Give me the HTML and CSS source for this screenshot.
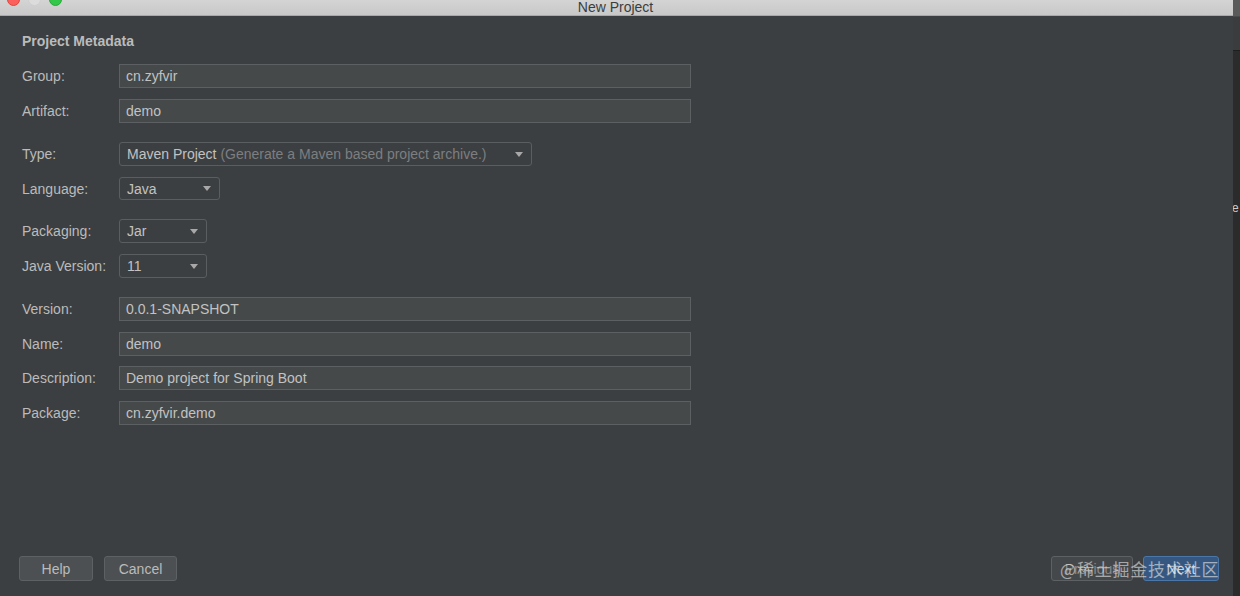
FILE: index.html
```html
<!DOCTYPE html>
<html>
<head>
<meta charset="utf-8">
<link rel="stylesheet" href="styles.css">
</head>
<body>
<div class="screen">
  <div class="window">
    <div class="titlebar">
      <div class="lights">
        <span class="light red"></span>
        <span class="light gray"></span>
        <span class="light green"></span>
      </div>
      <div class="title">New Project</div>
    </div>
    <div class="content">
      <div class="heading">Project Metadata</div>
      <div class="form">
        <div class="group">
          <div class="row"><label>Group:</label><div class="field wide">cn.zyfvir</div></div>
          <div class="row"><label>Artifact:</label><div class="field wide">demo</div></div>
        </div>
        <div class="group">
          <div class="row"><label>Type:</label><div class="combo type"><span>Maven Project <span class="hint">(Generate a Maven based project archive.)</span></span><span class="arrow"></span></div></div>
          <div class="row short"><label>Language:</label><div class="combo lang"><span>Java</span><span class="arrow"></span></div></div>
        </div>
        <div class="group">
          <div class="row"><label>Packaging:</label><div class="combo small"><span>Jar</span><span class="arrow"></span></div></div>
          <div class="row"><label>Java Version:</label><div class="combo small"><span>11</span><span class="arrow"></span></div></div>
        </div>
        <div class="group tight">
          <div class="row"><label>Version:</label><div class="field wide">0.0.1-SNAPSHOT</div></div>
          <div class="row"><label>Name:</label><div class="field wide">demo</div></div>
          <div class="row"><label>Description:</label><div class="field wide">Demo project for Spring Boot</div></div>
          <div class="row"><label>Package:</label><div class="field wide">cn.zyfvir.demo</div></div>
        </div>
      </div>
      <div class="footer">
        <div class="left">
          <div class="btn help">Help</div>
          <div class="btn cancel">Cancel</div>
        </div>
        <div class="right">
          <div class="btn prev">Previous</div>
          <div class="btn next">Next</div>
          <div class="watermark">@稀土掘金技术社区</div>
        </div>
      </div>
    </div>
  </div>
  <div class="strip">
    <div class="strip-top"></div>
    <div class="strip-bar"></div>
    <div class="strip-body"><span class="strip-e">e</span></div>
  </div>
</div>
</body>
</html>
```
FILE: styles.css
```css
* { box-sizing: border-box; }
html, body { margin: 0; padding: 0; }
body {
  width: 1240px;
  height: 596px;
  overflow: hidden;
  background: #2b2b2b;
  font-family: "Liberation Sans", Arial, sans-serif;
  font-size: 14px;
  color: #bbbbbb;
}
.screen { display: flex; width: 1240px; height: 596px; }
.window {
  width: 1233px;
  height: 596px;
  display: flex;
  flex-direction: column;
  background: #3c3f41;
}
.titlebar {
  height: 16px;
  background: linear-gradient(#d4d4d4, #c8c8c8);
  border-bottom: 1px solid #a9a9a9;
  position: relative;
  display: flex;
  justify-content: center;
  align-items: flex-end;
}
.lights {
  position: absolute;
  left: 7px;
  top: -7px;
  display: flex;
  gap: 8px;
}
.light { width: 13px; height: 13px; border-radius: 50%; display: block; }
.light.red { background: #fc605c; border: 1px solid #e0443e; }
.light.gray { background: #dcdcdc; border: 1px solid #cfcfcf; }
.light.green { background: #34c84a; border: 1px solid #27a93a; }
.title {
  font-size: 14px;
  color: #3d3d3d;
  line-height: 14px;
  margin-left: -2px;
  padding-bottom: 1px;
}
.content {
  flex: 1;
  display: flex;
  flex-direction: column;
  padding: 17px 0 0 22px;
}
.heading {
  font-weight: bold;
  color: #bbbbbb;
  font-size: 14px;
  line-height: 16px;
  height: 16px;
}
.form {
  margin-top: 15px;
  display: flex;
  flex-direction: column;
  gap: 19px;
}
.group { display: flex; flex-direction: column; gap: 11px; }
.group.tight { gap: 10.5px; }
.row { display: flex; align-items: center; height: 24px; }
.row.short { height: 23px; }
.row label { width: 97px; color: #bbbbbb; }
.field {
  height: 24px;
  background: #45494a;
  border: 1px solid #5d6062;
  padding: 0 6px;
  line-height: 22px;
  color: #c2c2c2;
}
.wide { width: 572px; }
.combo {
  height: 24px;
  background: #3c3f41;
  border: 1px solid #5b5e60;
  border-radius: 3px;
  padding: 0 6px 0 7px;
  display: flex;
  align-items: center;
  justify-content: space-between;
  line-height: 22px;
  color: #c2c2c2;
}
.row.short .combo { height: 23px; }
.combo .hint { color: #7c7e80; }
.combo.type { width: 413px; }
.combo.lang { width: 101px; }
.combo.small { width: 88px; }
.arrow {
  width: 0; height: 0;
  border-left: 4.5px solid transparent;
  border-right: 4.5px solid transparent;
  border-top: 5px solid #a8a8a8;
  margin-right: 2px;
}
.footer {
  margin-top: auto;
  margin-left: -3px;
  padding-bottom: 15px;
  display: flex;
  justify-content: space-between;
  align-items: center;
  padding-right: 14px;
}
.left, .right { display: flex; gap: 11px; }
.right { position: relative; gap: 10px; }
.btn {
  height: 25px;
  border: 1px solid #5e6163;
  border-radius: 3px;
  background: #4c5052;
  color: #bbbbbb;
  display: flex;
  align-items: center;
  justify-content: center;
  font-size: 14px;
}
.help { width: 74px; }
.cancel { width: 73px; }
.prev { width: 82px; color: #8a8a8a; background: #45484a; }
.next { width: 76px; background: #365880; border-color: #4a76a8; color: #c8d4e4; }
.watermark {
  position: absolute;
  left: 9px;
  top: 0px;
  font-family: "Noto Sans CJK SC", sans-serif;
  font-size: 17px;
  line-height: 25px;
  color: rgba(235, 235, 235, 0.6);
  white-space: nowrap;
  letter-spacing: 0.8px;
}
.strip {
  width: 7px;
  height: 596px;
  display: flex;
  flex-direction: column;
  background: #2b2b2b;
}
.strip-top { height: 16px; background: #5a5a5a; }
.strip-bar { height: 35px; background: #3a3c3e; border-bottom: 1px solid #1f1f1f; border-top: 1px solid #4a4a4a; }
.strip-body { flex: 1; padding-top: 148px; overflow: hidden; }
.strip-e { color: #cccccc; font-size: 12px; margin-left: -1px; }
```
